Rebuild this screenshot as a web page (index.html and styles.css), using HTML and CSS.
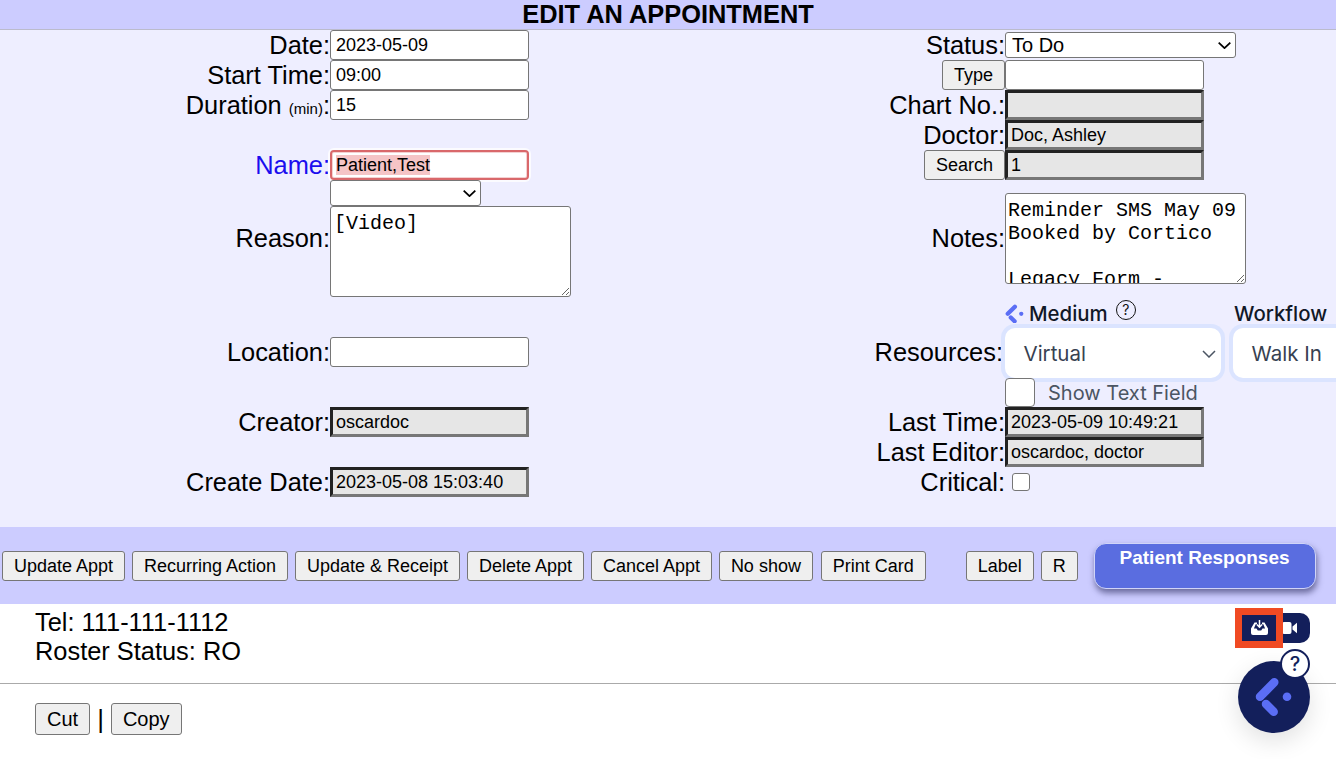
FILE: index.html
```html
<!DOCTYPE html>
<html lang="en">
<head>
<meta charset="utf-8">
<title>Edit an appointment</title>
<link rel="stylesheet" href="styles.css">
</head>
<body>
<header class="title">EDIT AN APPOINTMENT</header>
<form class="form">
  <div class="col col-left">
    <div class="row"><div class="label">Date:</div><div class="field">2023-05-09</div></div>
    <div class="row"><div class="label">Start Time:</div><div class="field">09:00</div></div>
    <div class="row"><div class="label">Duration <small class="unit">(min)</small>:</div><div class="field">15</div></div>
    <div class="row"></div>
    <div class="row"><div class="label label-blue">Name:</div><div class="field field-name"><span class="selected">Patient,Test</span></div></div>
    <div class="row row-select"><div class="label"></div>
      <div class="select-wrap"><select class="select select-name"><option></option></select><svg class="select-chev" viewBox="0 0 13 7" aria-hidden="true"><path d="M.7.7l5.800 5.400L12.300.7"/></svg></div>
    </div>
    <div class="row row-area"><div class="label label-top">Reason:</div><textarea class="area area-reason">[Video]</textarea></div>
    <div class="row row-gap-loc"><div class="label">Location:</div><div class="field"></div></div>
    <div class="row row-gap-creator"><div class="label">Creator:</div><div class="field field-ro">oscardoc</div></div>
    <div class="row row-gap-date"><div class="label">Create Date:</div><div class="field field-ro">2023-05-08 15:03:40</div></div>
  </div>
  <div class="col col-right">
    <div class="row"><div class="label">Status:</div>
      <div class="select-wrap"><select class="select select-status"><option>To Do</option></select><svg class="select-chev" viewBox="0 0 13 7" aria-hidden="true"><path d="M.7.7l5.800 5.400L12.300.7"/></svg></div>
    </div>
    <div class="row"><div class="label label-btn"><button type="button" class="btn">Type</button></div><div class="field"></div></div>
    <div class="row"><div class="label">Chart No.:</div><div class="field field-ro"></div></div>
    <div class="row"><div class="label">Doctor:</div><div class="field field-ro">Doc, Ashley</div></div>
    <div class="row"><div class="label label-btn"><button type="button" class="btn">Search</button></div><div class="field field-ro">1</div></div>
    <div class="row row-area row-notes"><div class="label">Notes:</div><textarea class="area area-notes">Reminder SMS May 09
Booked by Cortico

Legacy Form - 
</textarea></div>
    <div class="row row-heads">
      <div class="label"></div>
      <div class="pair">
        <div class="head">
          <svg class="kite-small" viewBox="17 16 37 38" aria-hidden="true"><path class="kite-bar" d="M22 35.700 36.300 21.300M28 43 35.700 50.700"/><circle class="kite-dot" cx="49" cy="35.700" r="4.300"/></svg>
          <span class="head-text">Medium</span>
          <span class="help">?</span>
        </div>
        <div class="head head-second"><span class="head-text">Workflow</span><span class="help help-cut"></span></div>
      </div>
    </div>
    <div class="row row-res">
      <div class="label label-res">Resources:</div>
      <div class="pair">
        <div class="fancy"><span>Virtual</span><svg class="chev" viewBox="0 0 14 8" aria-hidden="true"><path d="M1 1l6 6 6-6"/></svg></div>
        <div class="fancy"><span>Walk In</span></div>
      </div>
    </div>
    <div class="row row-show">
      <div class="label"></div>
      <span class="box-big"></span><span class="show-text">Show Text Field</span>
    </div>
    <div class="row"><div class="label">Last Time:</div><div class="field field-ro">2023-05-09 10:49:21</div></div>
    <div class="row"><div class="label">Last Editor:</div><div class="field field-ro">oscardoc, doctor</div></div>
    <div class="row"><div class="label">Critical:</div><span class="box-small"></span></div>
  </div>
</form>
<div class="bar">
  <button type="button" class="btn">Update Appt</button>
  <button type="button" class="btn">Recurring Action</button>
  <button type="button" class="btn">Update &amp; Receipt</button>
  <button type="button" class="btn">Delete Appt</button>
  <button type="button" class="btn">Cancel Appt</button>
  <button type="button" class="btn">No show</button>
  <button type="button" class="btn btn-print">Print Card</button>
  <button type="button" class="btn btn-label">Label</button>
  <button type="button" class="btn">R</button>
  <button type="button" class="btn-responses">Patient Responses</button>
</div>
<section class="info">
  <div>Tel: 111-111-1112</div>
  <div>Roster Status: RO</div>
</section>
<hr class="rule">
<div class="cutcopy">
  <button type="button" class="btn btn-big">Cut</button>
  <span class="sep">|</span>
  <button type="button" class="btn btn-big">Copy</button>
</div>

<div class="pill">
  <svg class="video" viewBox="0 0 15 12" aria-hidden="true"><rect x="0" y="0" width="9.500" height="12" rx="2"/><path d="M10.500 4.500 15 .800v10.400l-4.500-3.700z"/></svg>
</div>
<div class="inbox">
  <svg class="tray" viewBox="0 0 17 15" aria-hidden="true"><path d="M3.500 2.500H6v1.800H4.700L2.900 8.500h2.600l1.300 2h3.400l1.300-2h2.600L12.300 4.300H11V2.500h2.500L17 8.500V13a2 2 0 0 1-2 2H2a2 2 0 0 1-2-2V8.500z"/><path class="tray-arrow" d="M8.500 0V7M5.900 4.500 8.500 7.200 11.100 4.500"/></svg>
</div>
<div class="launcher">
  <svg class="kite-big" viewBox="0 0 72 72" aria-hidden="true"><path class="kite-bar" d="M22 35.700 36.300 21.300M28 43 35.700 50.700"/><circle class="kite-dot" cx="49" cy="35.700" r="4.300"/></svg>
</div>
<div class="bubble">?</div>
</body>
</html>
```

FILE: styles.css
```css
* { box-sizing: border-box; }
html, body { margin: 0; padding: 0; }
body {
  width: 1336px;
  height: 759px;
  overflow: hidden;
  position: relative;
  background: #fff;
  color: #000;
  font-family: "Liberation Sans", Arial, sans-serif;
  font-size: 18px;
}
.title {
  height: 30px;
  background: #ccf;
  border-bottom: 1px solid #bbbbcc;
  text-align: center;
  font-size: 25.400px;
  font-weight: 700;
  line-height: 29px;
}
.form {
  display: grid;
  grid-template-columns: 668px 668px;
  height: 497px;
  background: #eef;
  overflow: hidden;
}
.col { min-width: 0; }
.row {
  display: flex;
  align-items: center;
  height: 30px;
}
.label {
  flex: none;
  font-size: 25.400px;
  text-align: right;
  white-space: nowrap;
}
.col-left .label { width: 330px; }
.col-right .label { width: 337px; }
.label-btn { display: flex; justify-content: flex-end; }
.label-top { align-self: flex-start; margin-top: 18px; }
.col-right .label-res { padding-right: 2px; margin-top: -2px; }
.unit { font-size: 15px; }
.label-blue { color: #1a0dee; }
.field {
  width: 199px;
  height: 30px;
  padding: 0 5px;
  border: 1px solid #767676;
  border-radius: 3px;
  background: #fff;
  font-size: 18px;
  line-height: 28px;
  white-space: nowrap;
}
.field-ro {
  padding: 0 3px;
  border: 3px solid;
  border-color: #222 #777 #777 #222;
  border-radius: 0;
  background: #e6e6e6;
  line-height: 24px;
}
.field-name {
  border: 2px solid #d9686b;
  border-radius: 4px;
  box-shadow: inset 0 0 0 1px rgba(217, 104, 107, .3), 0 0 0 2px #fbfbff;
  padding: 0 4px;
  line-height: 26px;
}
.selected { display: inline-block; height: 20px; margin-top: 3px; line-height: 20px; background: #f5c4c6; vertical-align: top; }
.select-wrap { position: relative; flex: none; }
.select {
  display: block;
  height: 26px;
  padding: 0 0 0 6px;
  border: 1px solid #767676;
  border-radius: 3px;
  background: #fff;
  color: #000;
  font-family: "Liberation Sans", Arial, sans-serif;
  font-size: 20px;
  appearance: none;
}
.select-chev {
  position: absolute;
  right: 5px;
  top: 10px;
  width: 13px;
  height: 7px;
  fill: none;
  stroke: #000;
  stroke-width: 1.800;
  pointer-events: none;
}
.select-name { width: 151px; }
.select-status { width: 231px; }
.row-select { height: 26px; }
.row-area { height: 91px; }
.area {
  display: block;
  height: 91px;
  padding: 5px 2px 2px;
  border: 1px solid #767676;
  border-radius: 3px;
  background: #fff;
  font-family: "Liberation Mono", "Courier New", monospace;
  font-size: 20px;
  line-height: 23px;
  overflow: hidden;
  resize: both;
}
.area-reason { width: 241px; padding-left: 3px; }
.area-notes { width: 241px; }
.row-gap-loc { margin-top: 40px; }
.row-gap-creator { margin-top: 40px; }
.row-gap-date { margin-top: 30px; }
.row-notes { margin-top: 13px; }
.row-heads { height: 44px; align-items: flex-start; }
.row-res { height: 50px; }
.row-show { height: 29px; }
.pair {
  display: grid;
  grid-template-columns: 216px 216px;
  column-gap: 12px;
  flex: none;
}
.head {
  display: flex;
  align-items: center;
  height: 44px;
  padding-top: 15px;
  font-family: Inter, "Liberation Sans", sans-serif;
  font-size: 20.400px;
  font-weight: 500;
  color: #111827;
  white-space: nowrap;
}
.head-second { padding-left: 1px; }
.kite-small { flex: none; width: 19px; height: 19px; margin-right: 5px; }
.kite-bar { fill: none; stroke: #5b6ef5; stroke-width: 8.500; stroke-linecap: round; }
.kite-dot { fill: #5b6ef5; }
.help {
  flex: none;
  display: flex;
  align-items: center;
  justify-content: center;
  width: 20px;
  height: 20px;
  margin: -8px 0 0 8px;
  border: 1.500px solid #111;
  border-radius: 50%;
  font-size: 14px;
  font-weight: 400;
  color: #111;
}
.help-cut { margin-left: 9px; }
.fancy {
  position: relative;
  display: flex;
  align-items: center;
  height: 50px;
  padding-left: 18.500px;
  border-radius: 10px;
  background: #fff;
  box-shadow: 0 0 0 4px #dbe4ff;
  font-family: Inter, "Liberation Sans", sans-serif;
  font-size: 20.500px;
  color: #374151;
}
.chev {
  position: absolute;
  right: 5px;
  top: 22px;
  width: 14px;
  height: 8px;
  fill: none;
  stroke: #4b5563;
  stroke-width: 1.500;
}
.box-big {
  position: relative;
  flex: none;
  width: 30px;
  height: 29px;
  border: 1px solid #767676;
  border-radius: 4px;
  background: #fff;
}
.show-text {
  margin-left: 13px;
  font-family: Inter, "Liberation Sans", sans-serif;
  font-size: 20px;
  color: #4b5563;
}
.box-small {
  flex: none;
  width: 18px;
  height: 18px;
  margin-left: 7px;
  border: 1px solid #767676;
  border-radius: 3px;
  background: #fff;
}
.btn {
  height: 30px;
  padding: 0 11px;
  border: 1px solid #767676;
  border-radius: 3px;
  background: #efefef;
  color: #000;
  font-family: "Liberation Sans", Arial, sans-serif;
  font-size: 18px;
  white-space: nowrap;
}
.bar {
  display: flex;
  align-items: center;
  gap: 6.900px;
  height: 77px;
  padding: 1px 0 0 2px;
  background: #ccf;
}
.btn-print { margin-left: 1px; }
.btn-label { margin-left: 33px; }
.btn-responses {
  flex: none;
  display: flex;
  justify-content: center;
  align-items: flex-start;
  width: 222px;
  height: 46px;
  margin-left: 9px;
  padding: 3px 0 0;
  border: 1px solid #d0d4f8;
  border-radius: 12px;
  background: #5a6de0;
  box-shadow: 1px 4px 6px rgba(40, 40, 90, .6);
  color: #fff;
  font-family: "Liberation Sans", Arial, sans-serif;
  font-size: 19px;
  font-weight: 700;
  line-height: 22px;
}
.info {
  height: 79px;
  padding: 4px 0 0 35px;
  font-size: 25.400px;
  line-height: 29px;
}
.rule { height: 1px; margin: 0; border: 0; background: #aaa; }
.cutcopy {
  display: flex;
  align-items: center;
  gap: 7px;
  padding: 19px 0 0 35px;
}
.btn-big { height: 32px; font-size: 20px; }
.sep { font-size: 26px; line-height: 32px; }

.pill {
  position: absolute;
  left: 1241px;
  top: 613px;
  width: 69px;
  height: 30px;
  display: flex;
  align-items: center;
  justify-content: flex-end;
  padding-right: 13.500px;
  border-radius: 10px;
  background: #131f5b;
}
.video { width: 15px; height: 12px; fill: #fff; }
.inbox {
  position: absolute;
  left: 1235px;
  top: 608px;
  width: 48px;
  height: 40px;
  display: flex;
  align-items: center;
  justify-content: center;
  padding-bottom: 1px;
  border: 7px solid #f04a23;
  background: #131f5b;
}
.tray { width: 17px; height: 15px; fill: #fff; }
.tray-arrow { fill: none; stroke: #fff; stroke-width: 1.500; }
.launcher {
  position: absolute;
  left: 1238px;
  top: 661px;
  width: 72px;
  height: 72px;
  border-radius: 50%;
  background: #131f5b;
  box-shadow: 0 8px 24px rgba(0, 0, 0, .12);
}
.kite-big { display: block; width: 72px; height: 72px; }
.bubble {
  position: absolute;
  left: 1280px;
  top: 649px;
  width: 30px;
  height: 30px;
  display: flex;
  align-items: center;
  justify-content: center;
  border: 2px solid #131f5b;
  border-radius: 50%;
  background: #fff;
  color: #131f5b;
  font-family: Inter, "Liberation Sans", sans-serif;
  font-size: 20px;
  font-weight: 500;
}
```
